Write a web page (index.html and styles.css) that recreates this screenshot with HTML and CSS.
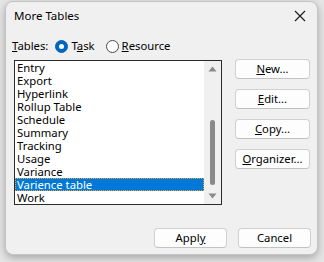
FILE: index.html
```html
<!DOCTYPE html>
<html>
<head>
<meta charset="utf-8">
<link rel="stylesheet" href="styles.css">
</head>
<body>
<div class="dialog">
  <div class="titlebar">
    <span class="title">More Tables</span>
    <svg class="close" width="12" height="12" viewBox="0 0 12 12"><path d="M1 1 L11 11 M11 1 L1 11" stroke="#1a1a1a" stroke-width="1.1" fill="none"/></svg>
  </div>
  <div class="body">
    <div class="tables-row">
      <span class="label"><u>T</u>ables:</span>
      <span class="radio checked"><span class="dot"></span></span>
      <span class="rlabel">T<u>a</u>sk</span>
      <span class="radio"></span>
      <span class="rlabel"><u>R</u>esource</span>
    </div>
    <div class="main">
      <div class="listbox">
        <div class="items">
          <div class="item">Entry</div>
          <div class="item">Export</div>
          <div class="item">Hyperlink</div>
          <div class="item">Rollup Table</div>
          <div class="item">Schedule</div>
          <div class="item">Summary</div>
          <div class="item">Tracking</div>
          <div class="item">Usage</div>
          <div class="item">Variance</div>
          <div class="item selected">Varience table</div>
          <div class="item">Work</div>
        </div>
        <div class="scrollbar">
          <svg class="arrow up" width="9" height="6" viewBox="0 0 9 6"><path d="M4.5 0.5 L8.5 5.5 L0.5 5.5 Z" fill="#8a8a8a"/></svg>
          <div class="track"><div class="thumb"></div></div>
          <svg class="arrow down" width="9" height="6" viewBox="0 0 9 6"><path d="M0.5 0.5 L8.5 0.5 L4.5 5.5 Z" fill="#8a8a8a"/></svg>
        </div>
      </div>
      <div class="side">
        <button class="btn"><u>N</u>ew...</button>
        <button class="btn"><u>E</u>dit...</button>
        <button class="btn"><u>C</u>opy...</button>
        <button class="btn"><u>O</u>rganizer...</button>
      </div>
    </div>
    <div class="footer">
      <button class="btn small">Appl<u>y</u></button>
      <button class="btn small">Cancel</button>
    </div>
  </div>
</div>
</body>
</html>
```
FILE: styles.css
```css
html, body {
  margin: 0;
  padding: 0;
}
body {
  width: 324px;
  height: 262px;
  background: #e6e6e6;
  font-family: "Noto Sans", "Open Sans", sans-serif;
  font-size: 11.3px;
  color: #000;
  overflow: hidden;
}
.dialog {
  margin: 1px 0 0 5px;
  width: 311px;
  height: 252px;
  background: #f0f0f0;
  border: 1px solid #c4c4c4;
  border-radius: 8px;
  box-shadow: 0 3px 8px rgba(0,0,0,0.28);
  display: flex;
  flex-direction: column;
}
.titlebar {
  height: 28px;
  display: flex;
  align-items: center;
  justify-content: space-between;
  padding: 0 11px 0 8px;
}
.title {
  font-size: 11.5px;
  line-height: 14px;
}
.close {
  display: block;
}
.body {
  display: flex;
  flex-direction: column;
  padding: 0 6px 0 8px;
}
.tables-row {
  display: flex;
  align-items: center;
  height: 14px;
  margin-top: 9px;
  margin-left: -2px;
  line-height: 14px;
}
.label {
  margin-right: 7px;
}
.radio {
  width: 11px;
  height: 11px;
  border: 1px solid #4a4a4a;
  border-radius: 50%;
  background: #fff;
  box-sizing: content-box;
  display: flex;
  align-items: center;
  justify-content: center;
  margin-right: 3px;
}
.radio.checked {
  background: #0067c0;
  border-color: #0067c0;
}
.radio .dot {
  width: 5px;
  height: 5px;
  border-radius: 50%;
  background: #fff;
}
.rlabel {
  margin-right: 11px;
}
.main {
  display: flex;
  margin-top: 7px;
  gap: 13px;
}
.listbox {
  width: 206px;
  height: 143px;
  border: 1px solid #2b2b2b;
  background: #fff;
  display: flex;
}
.items {
  flex: 1;
}
.item {
  height: 13px;
  line-height: 13px;
  padding-left: 2px;
  white-space: nowrap;
}
.item.selected {
  background: #0078d7;
  color: #fff;
  outline: 1px dotted #e8a23a;
  outline-offset: -1px;
}
.scrollbar {
  width: 17px;
  background: #f0f0f0;
  display: flex;
  flex-direction: column;
  align-items: center;
}
.arrow {
  display: block;
}
.arrow.up {
  margin-top: 5px;
}
.arrow.down {
  margin-bottom: 5px;
}
.track {
  flex: 1;
  width: 100%;
  display: flex;
  flex-direction: column;
  align-items: center;
}
.thumb {
  width: 5px;
  height: 65px;
  background: #8a8a8a;
  border-radius: 3px;
  margin-top: 48px;
}
.side {
  display: flex;
  flex-direction: column;
  gap: 10px;
  margin-top: -1px;
}
.btn {
  width: 75px;
  height: 20px;
  padding: 0;
  background: #fdfdfd;
  border: 1px solid #d0d0d0;
  border-bottom-color: #c2c2c2;
  border-radius: 4px;
  font-family: "Noto Sans", "Open Sans", sans-serif;
  font-size: 11.3px;
  line-height: 16px;
  color: #000;
}
.btn.small {
  width: 73px;
}
.footer {
  display: flex;
  justify-content: flex-end;
  gap: 11px;
  margin-top: 23px;
}
```
